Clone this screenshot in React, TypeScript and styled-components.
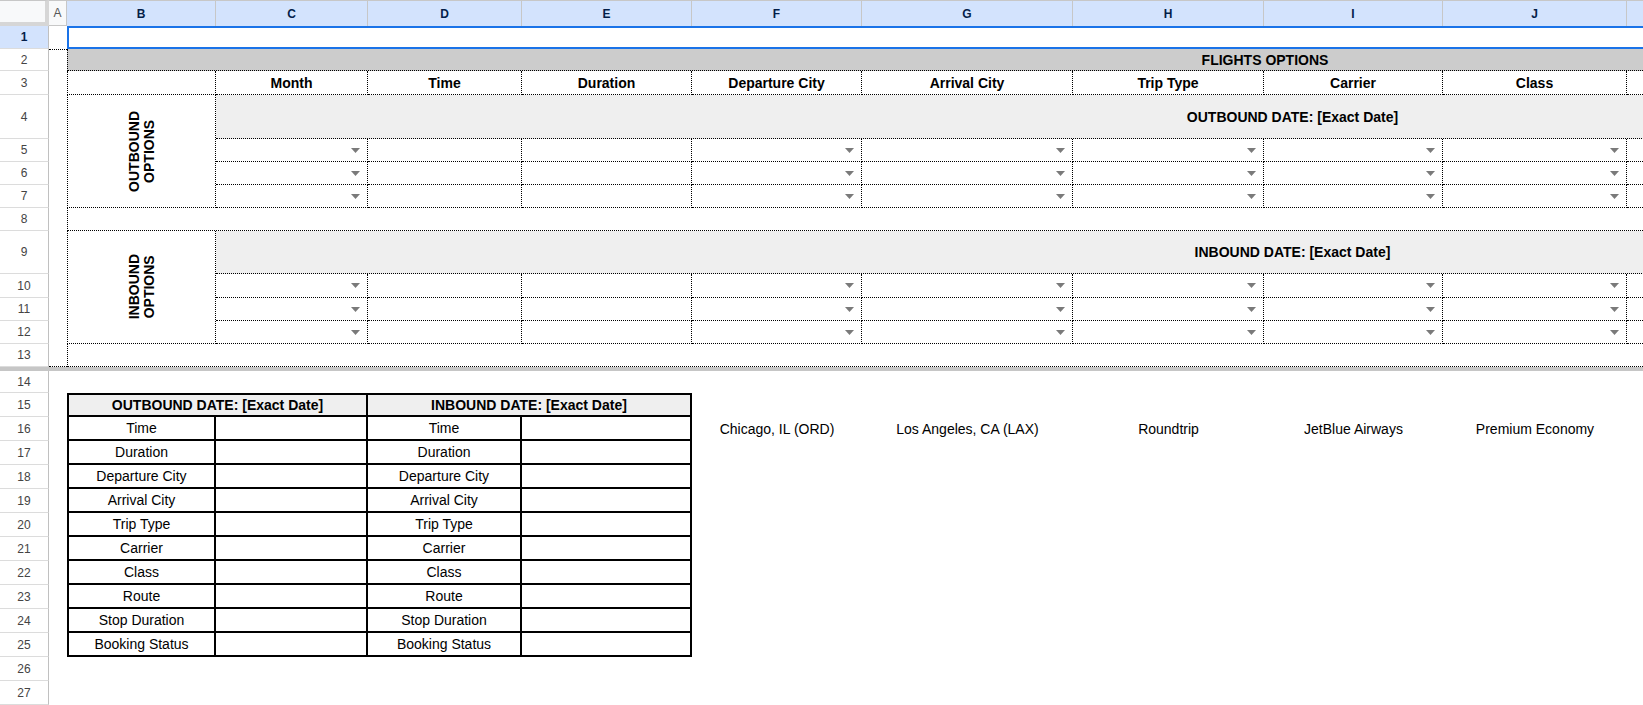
import styled, { createGlobalStyle } from "styled-components";

// column widths: row header, A, B ... M (K onward runs past the window)
const COLUMNS =
  "49px 18px 149px 152px 154px 170px 170px 211px 191px 179px 184px 184px 559px 93px";
const TOP_ROWS = "23px 22px 24px 44px 23px 23px 23px 23px 43px 24px 23px 23px 23px";
const BOTTOM_ROWS = "22px repeat(13, 24px)";

const DOT = "1px dotted #000";
const SOLID = "2px solid #000";

// K, L, M sit past the right edge, so their letters are never seen
const LETTERS = ["B", "C", "D", "E", "F", "G", "H", "I", "J", "", "", ""];
const FIELDS = ["Month", "Time", "Duration", "Departure City", "Arrival City", "Trip Type", "Carrier", "Class"];
// columns C..K: which ones carry a dropdown chip
const PICKS = [true, false, false, true, true, true, true, true, false];
const SUMMARY = [
  "Time",
  "Duration",
  "Departure City",
  "Arrival City",
  "Trip Type",
  "Carrier",
  "Class",
  "Route",
  "Stop Duration",
  "Booking Status",
];
const SAMPLE = ["Chicago, IL (ORD)", "Los Angeles, CA (LAX)", "Roundtrip", "JetBlue Airways", "Premium Economy"];

const GlobalStyle = createGlobalStyle`
  html, body {
    margin: 0;
    padding: 0;
    background: #fff;
    overflow: hidden;
  }
  body {
    font-family: "Liberation Sans", Arial, sans-serif;
    color: #000;
  }
`;

const Sheet = styled.div`
  width: 1643px;
  height: 705px;
  overflow: hidden;
  display: flex;
  flex-direction: column;
`;

const Pane = styled.div<{ $rows: string }>`
  display: grid;
  grid-template-columns: ${COLUMNS};
  grid-template-rows: ${(p) => p.$rows};
  width: max-content;
  flex-shrink: 0;
`;

const Cell = styled.div<{ $col: number; $row: number; $cspan?: number; $rspan?: number }>`
  grid-column: ${(p) => p.$col} / span ${(p) => p.$cspan ?? 1};
  grid-row: ${(p) => p.$row} / span ${(p) => p.$rspan ?? 1};
  box-sizing: border-box;
  display: flex;
  align-items: center;
  justify-content: center;
  min-width: 0;
  white-space: nowrap;
  font-size: 14px;
`;

const Corner = styled(Cell)`
  background: #f8f9fa;
  border-top: 1px solid #c7c7c7;
  border-right: 4px solid #d6d6d6;
  border-bottom: 4px solid #d6d6d6;
`;

const ColHead = styled(Cell)<{ $sel?: boolean }>`
  background: ${(p) => (p.$sel ? "#d3e3fd" : "#f8f9fa")};
  color: ${(p) => (p.$sel ? "#041e49" : "#575757")};
  font-weight: ${(p) => (p.$sel ? 700 : 400)};
  font-size: 12px;
  border-top: 1px solid #c7c7c7;
  border-right: 1px solid #c7c7c7;
  border-bottom: ${(p) => (p.$sel ? "none" : "1px solid #c7c7c7")};
`;

const RowHead = styled(Cell)<{ $sel?: boolean }>`
  background: ${(p) => (p.$sel ? "#d3e3fd" : "#fff")};
  color: ${(p) => (p.$sel ? "#041e49" : "#444")};
  font-weight: ${(p) => (p.$sel ? 700 : 400)};
  font-size: 12px;
  border-right: 1px solid #c0c0c0;
  border-bottom: 1px solid #dcdcdc;
`;

const Selection = styled(Cell)`
  border: 2px solid #1a73e8;
  background: #fff;
`;

const EdgeMark = styled(Cell)<{ $side: "top" | "bottom" }>`
  border-${(p) => p.$side}: ${DOT};
`;

const DotCell = styled(Cell)<{ $left?: boolean; $bg?: string; $bold?: boolean }>`
  border-right: ${DOT};
  border-bottom: ${DOT};
  ${(p) => (p.$left ? `border-left: ${DOT};` : "")}
  background: ${(p) => p.$bg ?? "transparent"};
  font-weight: ${(p) => (p.$bold ? 700 : 400)};
`;

const PickCell = styled(DotCell)`
  justify-content: flex-end;
  padding-right: 7px;
`;

const SideLabel = styled.span`
  writing-mode: vertical-rl;
  transform: rotate(180deg);
  font-weight: 700;
  font-size: 14px;
  line-height: 15px;
  text-align: center;
  white-space: normal;
`;

const FreezeBar = styled.div`
  height: 4px;
  background: #c6c6c6;
  flex-shrink: 0;
`;

const BoxCell = styled(Cell)<{ $left?: boolean; $top?: boolean; $head?: boolean }>`
  border-right: ${SOLID};
  border-bottom: ${SOLID};
  ${(p) => (p.$left ? `border-left: ${SOLID};` : "")}
  ${(p) => (p.$top ? `border-top: ${SOLID};` : "")}
  background: ${(p) => (p.$head ? "#efefef" : "#fff")};
  font-weight: ${(p) => (p.$head ? 700 : 400)};
`;

const Value = styled(Cell)`
  font-size: 14px;
`;

const Arrow = () => (
  <svg width="9" height="5" viewBox="0 0 9 5">
    <path d="M0 0 H9 L4.5 5 Z" fill="#7a7a7a" />
  </svg>
);

const OptionRows = ({ start }: { start: number }) => (
  <>
    {[0, 1, 2].map((r) =>
      PICKS.map((pick, i) => (
        <PickCell key={`${r}-${i}`} $col={4 + i} $row={start + r}>
          {pick && <Arrow />}
        </PickCell>
      ))
    )}
  </>
);

const SummaryTable = ({ col, title, left }: { col: number; title: string; left?: boolean }) => (
  <>
    <BoxCell $col={col} $row={2} $cspan={2} $top $head $left={left}>
      {title}
    </BoxCell>
    {SUMMARY.map((label, i) => (
      <BoxCell key={`l-${label}`} $col={col} $row={3 + i} $left={left}>
        {label}
      </BoxCell>
    ))}
    {SUMMARY.map((label, i) => (
      <BoxCell key={`v-${label}`} $col={col + 1} $row={3 + i} />
    ))}
  </>
);

const App = () => {
  return (
    <>
      <GlobalStyle />
      <Sheet>
        <Pane $rows="26px">
          <Corner $col={1} $row={1} />
          <ColHead $col={2} $row={1}>
            A
          </ColHead>
          {LETTERS.map((l, i) => (
            <ColHead key={i} $col={3 + i} $row={1} $sel>
              {l}
            </ColHead>
          ))}
        </Pane>

        <Pane $rows={TOP_ROWS}>
          {Array.from({ length: 13 }, (_, i) => (
            <RowHead key={i} $col={1} $row={i + 1} $sel={i === 0}>
              {i + 1}
            </RowHead>
          ))}

          <Selection $col={3} $row={1} $cspan={12} />
          <EdgeMark $col={2} $row={2} $side="top" />
          <EdgeMark $col={2} $row={13} $side="bottom" />

          <DotCell $col={3} $row={2} $cspan={12} $left $bg="#cccccc" $bold>
            FLIGHTS OPTIONS
          </DotCell>

          <DotCell $col={3} $row={3} $left />
          {FIELDS.map((f, i) => (
            <DotCell key={f} $col={4 + i} $row={3} $bold>
              {f}
            </DotCell>
          ))}
          <DotCell $col={12} $row={3} />

          <DotCell $col={3} $row={4} $rspan={4} $left>
            <SideLabel>
              OUTBOUND
              <br />
              OPTIONS
            </SideLabel>
          </DotCell>
          <DotCell $col={4} $row={4} $cspan={10} $bg="#efefef" $bold>
            OUTBOUND DATE: [Exact Date]
          </DotCell>
          <OptionRows start={5} />

          <DotCell $col={3} $row={8} $cspan={12} $left />

          <DotCell $col={3} $row={9} $rspan={4} $left>
            <SideLabel>
              INBOUND
              <br />
              OPTIONS
            </SideLabel>
          </DotCell>
          <DotCell $col={4} $row={9} $cspan={10} $bg="#efefef" $bold>
            INBOUND DATE: [Exact Date]
          </DotCell>
          <OptionRows start={10} />

          <DotCell $col={3} $row={13} $cspan={12} $left />
        </Pane>

        <FreezeBar />

        <Pane $rows={BOTTOM_ROWS}>
          {Array.from({ length: 14 }, (_, i) => (
            <RowHead key={i} $col={1} $row={i + 1}>
              {i + 14}
            </RowHead>
          ))}

          <SummaryTable col={3} title="OUTBOUND DATE: [Exact Date]" left />
          <SummaryTable col={5} title="INBOUND DATE: [Exact Date]" />

          {SAMPLE.map((s, i) => (
            <Value key={s} $col={7 + i} $row={3}>
              {s}
            </Value>
          ))}
        </Pane>
      </Sheet>
    </>
  );
};

export default App;
